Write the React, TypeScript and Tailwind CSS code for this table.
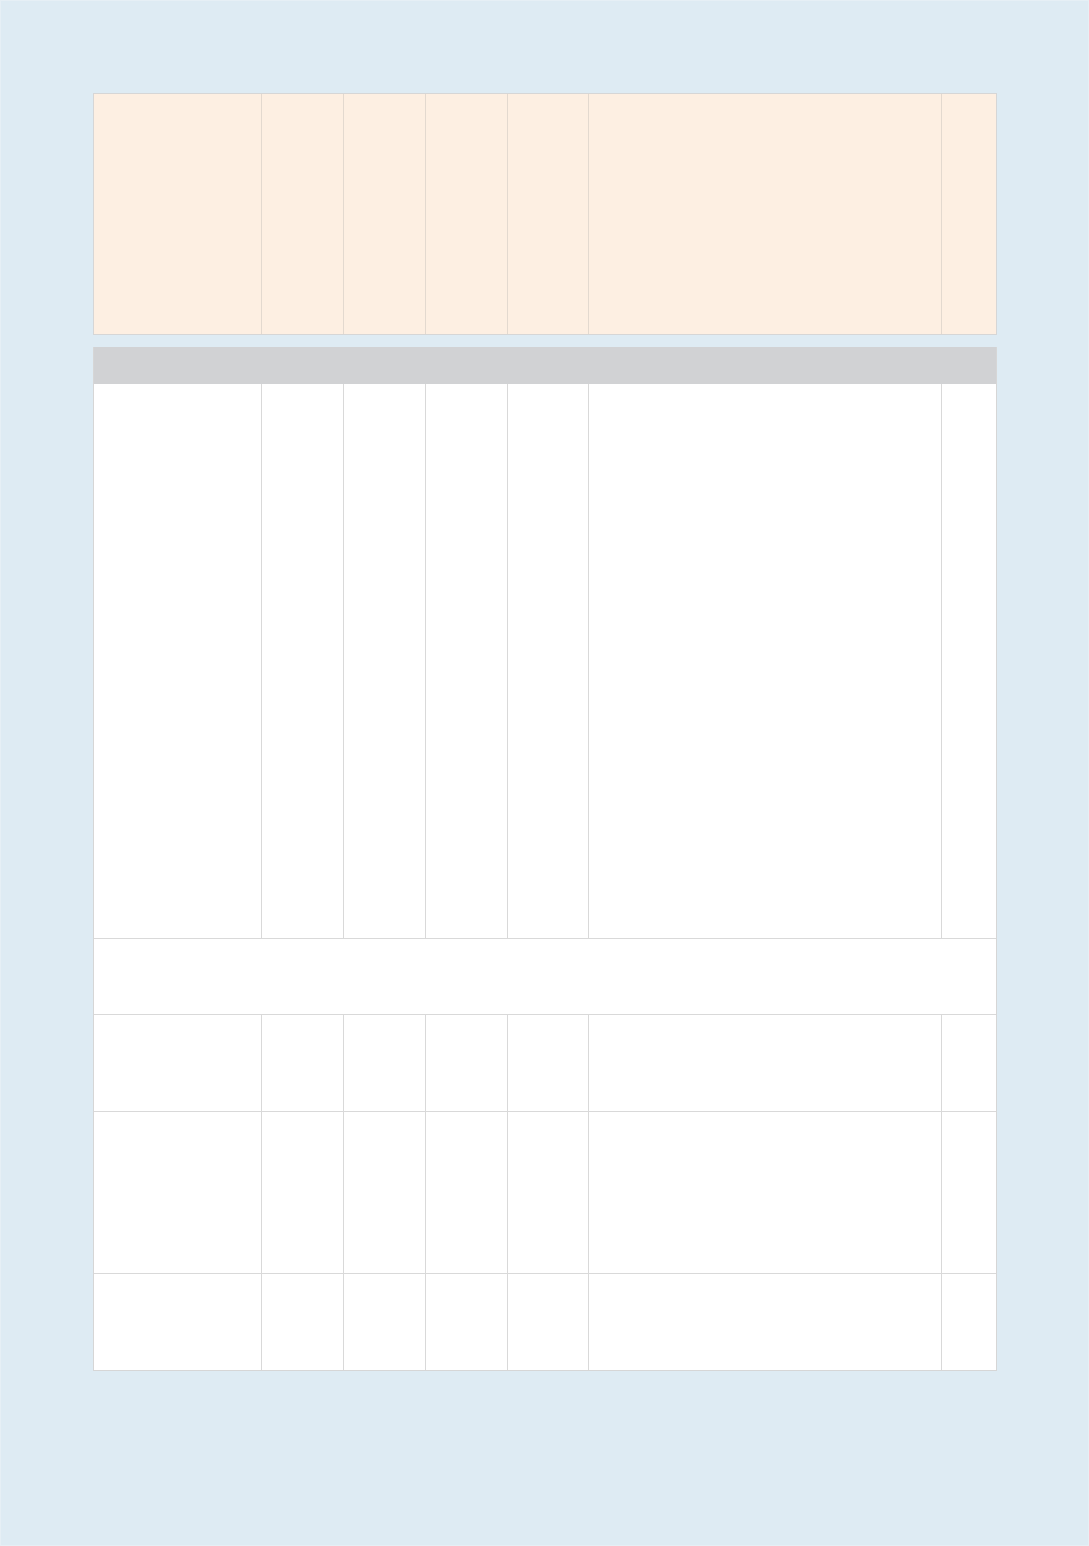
const cols = "grid grid-cols-[168px_82px_82px_82px_81px_353px_1fr]";

function Row({ h, tone = "body", first = false }: { h: string; tone?: "head" | "body"; first?: boolean }) {
  const line = tone === "head" ? "border-[#e3d9cf]" : "border-[#d9d9d9]";
  return (
    <div className={`${cols} ${h} ${first ? "" : `border-t ${line}`}`}>
      {Array.from({ length: 7 }).map((_, i) => (
        <div key={i} className={i < 6 ? `border-r ${line}` : ""} />
      ))}
    </div>
  );
}

export default function App() {
  return (
    <div className="min-h-[1546px] w-[1089px] bg-[#deebf3] border border-[#e6eff5] pt-[92px] pl-[92px] pr-[91px] font-['Liberation_Sans',sans-serif]">
      <div className="border border-[#d6d6d6] bg-[#fdefe2]">
        <Row h="h-[240px]" tone="head" first />
      </div>

      <div className="mt-[12px] border-x border-b border-[#d6d6d6] bg-white">
        <div className="h-[37px] bg-[#d1d2d4]" />
        <Row h="h-[554px]" first />
        <div className="h-[76px] border-t border-[#d9d9d9]" />
        <Row h="h-[97px]" />
        <Row h="h-[162px]" />
        <Row h="h-[97px]" />
      </div>
    </div>
  );
}
